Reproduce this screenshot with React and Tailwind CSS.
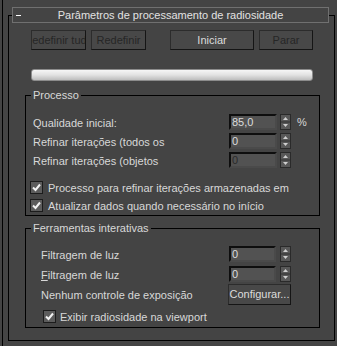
import React from "react";

function Btn({ children, w, active }) {
  return (
    <div
      className={`${w} h-[20px] flex items-center justify-center overflow-hidden whitespace-nowrap bg-[#484848] border border-[#2c2c2c] border-r-[#151515] border-b-[#151515] ${
        active ? "text-[#dcdcdc]" : "text-[#262626]"
      }`}
    >
      {children}
    </div>
  );
}

function Field({ value, disabled, w = "w-[48px]" }) {
  return (
    <div
      className={`${w} h-[16px] flex items-center pl-[1px] bg-[#525252] border-2 border-t-[#0e0e0e] border-l-[#0e0e0e] border-b-[#4a4a4a] border-r-[#4a4a4a] ${
        disabled ? "text-[#2a2a2a]" : "text-[#dcdcdc]"
      }`}
    >
      {value}
    </div>
  );
}

function Spinner() {
  return (
    <svg width="11" height="16" viewBox="0 0 11 16" className="ml-[3px] shrink-0">
      <rect x="0.5" y="0.5" width="10" height="15" fill="#585858" stroke="#2a2a2a" />
      <line x1="1" y1="8" x2="10" y2="8" stroke="#2e2e2e" />
      <path d="M5.5 3 L8 6 L3 6 Z" fill="#cfcfcf" />
      <path d="M3 10 L8 10 L5.5 13 Z" fill="#cfcfcf" />
    </svg>
  );
}

function Check() {
  return (
    <svg width="13" height="13" viewBox="0 0 13 13" className="shrink-0">
      <rect x="0.5" y="0.5" width="12" height="12" fill="#5c5c5c" stroke="#1c1c1c" />
      <path d="M3 6.5 L5.5 9 L10 3.5" fill="none" stroke="#f2f2f2" strokeWidth="2" />
    </svg>
  );
}

function Group({ title, h, children }) {
  return (
    <div className={`ml-[16px] w-[295px] ${h} border border-black`}>
      <div className="-mt-[7px] ml-[5px] h-[12px] leading-[12px] px-[2px] bg-[#444444] inline-block align-top">
        {title}
      </div>
      {children}
    </div>
  );
}

export default function App() {
  return (
    <div className="w-[337px] h-[346px] bg-[#444444] overflow-hidden pl-[2px] text-[11px] leading-none text-[#d8d8d8] font-['Liberation_Sans',Arial,sans-serif]">
      <div className="h-full border-l border-black pl-[5px] pt-[15px]">
        <div className="w-[327px] h-[326px] border border-black">
          {/* rollout header */}
          <div className="-mt-[9px] ml-[3px] w-[317px] h-[16px] border border-[#707070] bg-[#444444] grid grid-cols-[20px_1fr_20px] items-center">
            <div className="ml-[3px] w-[5px] h-[1px] bg-white" />
            <div className="text-center whitespace-nowrap text-[#e2e2e2]">
              Parâmetros de processamento de radiosidade
            </div>
            <div />
          </div>

          {/* buttons */}
          <div className="mt-[7px] ml-[22px] flex">
            <Btn w="w-[55px]">Redefinir tudo</Btn>
            <div className="ml-[5px]">
              <Btn w="w-[55px]">Redefinir</Btn>
            </div>
            <div className="ml-[24px]">
              <Btn w="w-[84px]" active>
                Iniciar
              </Btn>
            </div>
            <div className="ml-[5px]">
              <Btn w="w-[54px]">Parar</Btn>
            </div>
          </div>

          {/* progress bar */}
          <div className="mt-[19px] ml-[22px] w-[282px] h-[12px] rounded-[3px] border border-[#8c8c8c] bg-gradient-to-b from-[#f6f6f6] via-[#e2e2e2] to-[#bdbdbd]" />

          <div className="mt-[14px]">
            <Group title="Processo" h="h-[121px]">
              <div className="mt-[7px] flex flex-col gap-[3px]">
                <div className="flex items-center h-[16px] pl-[7px]">
                  <span className="w-[196px] pt-[3px] whitespace-nowrap overflow-hidden">Qualidade inicial:</span>
                  <Field value="85,0" />
                  <Spinner />
                  <span className="ml-[6px] pt-[1px]">%</span>
                </div>
                <div className="flex items-center h-[16px] pl-[7px]">
                  <span className="w-[196px] pt-[3px] whitespace-nowrap overflow-hidden">Refinar iterações (todos os</span>
                  <Field value="0" />
                  <Spinner />
                </div>
                <div className="flex items-center h-[16px] pl-[7px]">
                  <span className="w-[196px] pt-[3px] whitespace-nowrap overflow-hidden">Refinar iterações (objetos</span>
                  <Field value="0" disabled />
                  <Spinner />
                </div>
              </div>
              <div className="mt-[13px] flex flex-col gap-[5px] pl-[4px]">
                <div className="flex items-center h-[13px] gap-[5px] whitespace-nowrap">
                  <Check />
                  <span className="pt-[1px]">Processo para refinar iterações armazenadas em</span>
                </div>
                <div className="flex items-center h-[13px] gap-[5px] whitespace-nowrap">
                  <Check />
                  <span className="pt-[1px]">Atualizar dados quando necessário no início</span>
                </div>
              </div>
            </Group>
          </div>

          <div className="mt-[12px]">
            <Group title="Ferramentas interativas" h="h-[100px]">
              <div className="mt-[6px] flex flex-col gap-[4px]">
                <div className="flex items-center h-[16px] pl-[15px]">
                  <span className="w-[188px] pt-[2px] whitespace-nowrap">Filtragem de luz</span>
                  <Field value="0" w="w-[47px]" />
                  <div className="ml-[1px]">
                    <Spinner />
                  </div>
                </div>
                <div className="flex items-center h-[16px] pl-[15px]">
                  <span className="w-[188px] pt-[2px] whitespace-nowrap">
                    <span className="underline">F</span>iltragem de luz
                  </span>
                  <Field value="0" w="w-[47px]" />
                  <div className="ml-[1px]">
                    <Spinner />
                  </div>
                </div>
              </div>
              <div className="mt-[2px] flex items-center h-[21px] pl-[15px]">
                <span className="w-[187px] pt-[2px] whitespace-nowrap">Nenhum controle de exposição</span>
                <div className="w-[63px] h-[21px] flex items-center justify-center whitespace-nowrap bg-[#484848] border border-[#2c2c2c] border-r-[#151515] border-b-[#151515] text-[#dcdcdc]">
                  Configurar...
                </div>
              </div>
              <div className="mt-[5px] flex items-center h-[13px] gap-[4px] pl-[17px] whitespace-nowrap">
                <Check />
                <span className="pt-[1px]">Exibir radiosidade na viewport</span>
              </div>
            </Group>
          </div>
        </div>
      </div>
    </div>
  );
}
